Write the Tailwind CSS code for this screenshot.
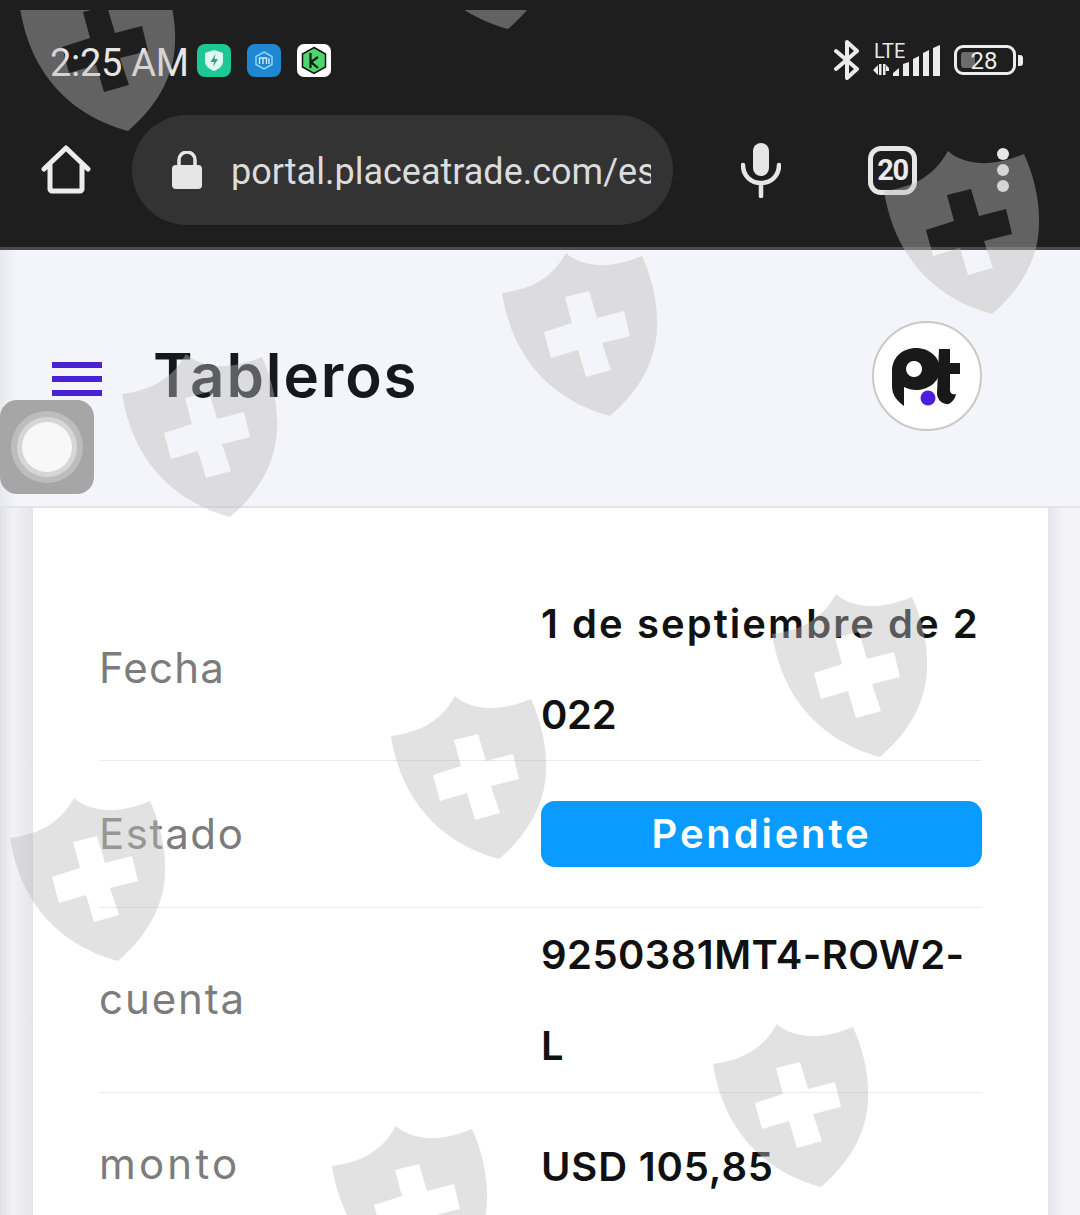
<!DOCTYPE html>
<html lang="es">
<head>
  <meta charset="UTF-8" />
  <title>Tableros</title>
  <script src="https://cdn.jsdelivr.net/npm/@tailwindcss/browser@4"></script>
</head>
<body class="bg-[#f4f5fa]">
  <div class="relative w-[1080px] h-[1215px] overflow-hidden bg-[#f4f5fa] font-['Inter',sans-serif]">

    <!-- phone status bar + browser toolbar -->
    <header class="h-[250px] bg-[#1e1e1e] border-b-[3px] border-[#4b4b4b] font-['Roboto',sans-serif]">
      <div class="h-[115px] flex items-start justify-between pl-[50px] pr-[64px]">
        <div class="flex items-center h-[33px] mt-[44px]">
          <span class="text-[38px] leading-none text-[#e6e6e6] w-[147px] tracking-[-0.3px] mt-[5px]">2:25 AM</span>
          <svg class="w-[34px] h-[33px]" viewBox="0 0 34 33">
            <rect width="34" height="33" rx="8" fill="#1fc796"/>
            <path d="M17 6l9 3v8c0 5-4 8-9 10-5-2-9-5-9-10V9z" fill="#dff7ef"/>
            <path d="M18.500 10l-5 8h3.500l-1 5 5-8h-3.500z" fill="#3c9c86"/>
          </svg>
          <svg class="w-[34px] h-[33px] ml-[16px]" viewBox="0 0 34 33">
            <rect width="34" height="33" rx="8" fill="#1f86d2"/>
            <path d="M17 8l8 4.500v8L17 25l-8-4.500v-8z" fill="none" stroke="#8fd6f5" stroke-width="1.500"/>
            <path d="M12.500 20v-6h3.500v6M16 14h3.500v6M22 14v6" fill="none" stroke="#d5f0fb" stroke-width="1.300"/>
          </svg>
          <svg class="w-[34px] h-[33px] ml-[16px]" viewBox="0 0 34 33">
            <rect width="34" height="33" rx="7" fill="#fff"/>
            <path d="M17 3.500l11.500 6.500v13L17 29.500 5.500 23V10z" fill="#4fd46e" stroke="#111" stroke-width="1.500"/>
            <path d="M13.500 9v15M21 13l-7 5 7 6" fill="none" stroke="#06200f" stroke-width="2.200"/>
          </svg>
        </div>
        <div class="flex items-start mt-[40px]">
          <svg class="w-[26px] h-[40px]" viewBox="0 0 26 40">
            <path d="M2 11l21 18-10 9V2l10 9L2 29" fill="none" stroke="#ececec" stroke-width="4" stroke-linejoin="round" stroke-linecap="round"/>
          </svg>
          <div class="relative w-[67px] h-[36px] ml-[13px]">
            <span class="absolute left-[1px] top-[1px] text-[20px] leading-[20px] text-[#e6e6e6]">LTE</span>
            <svg class="absolute left-0 top-0" width="67" height="36" viewBox="0 0 67 36">
              <path d="M0 30l5-5v10zM6 24h2.500v11H6zM10 24h2.500v11H10zM13 25l3 3v3h-3z" fill="#ececec"/>
              <path d="M20 33l6-5v8h-6zM30 24l6-2v14h-6zM40 19l6-3v20h-6zM50 13l6-3v26h-6zM60 8l7-3v31h-7z" fill="#ececec"/>
            </svg>
          </div>
          <div class="relative w-[62px] h-[30px] ml-[14px] mt-[5px] rounded-[9px] border-[3px] border-[#ececec]">
            <div class="absolute left-[4px] top-[4px] w-[14px] h-[16px] rounded-[3px] bg-[#6b6b6b]"></div>
            <span class="absolute inset-0 flex items-center justify-center pr-[2px] pt-[2px] text-[24px] leading-none text-[#ececec]">28</span>
            <div class="absolute left-[61px] top-[7px] w-[5px] h-[11px] rounded-r-[3px] bg-[#ececec]"></div>
          </div>
        </div>
      </div>
      <div class="flex items-center h-[110px]">
        <svg class="ml-[41px] w-[50px] h-[50px]" viewBox="0 0 50 50">
          <path d="M3 24L25 3l22 21M9 19v25a2 2 0 0 0 2 2h28a2 2 0 0 0 2-2V19" fill="none" stroke="#ececec" stroke-width="5" stroke-linecap="round" stroke-linejoin="round"/>
        </svg>
        <div class="ml-[41px] w-[541px] h-[110px] rounded-[55px] bg-[#333] flex items-center pl-[40px] pr-[21px]">
          <svg class="w-[30px] h-[38px] shrink-0" viewBox="0 0 30 38">
            <path d="M7 15V9a8 8 0 0 1 16 0v6" fill="none" stroke="#e6e6e6" stroke-width="3.500"/>
            <rect y="14" width="30" height="24" rx="4" fill="#e6e6e6"/>
          </svg>
          <span class="ml-[29px] mt-[3px] text-[36px] leading-none text-[#dcdcdc] overflow-hidden whitespace-nowrap w-[420px]">portal.placeatrade.com/es</span>
        </div>
        <svg class="ml-[68px] w-[40px] h-[56px]" viewBox="0 0 40 56">
          <rect x="12" y="1" width="16" height="33" rx="8" fill="#e6e6e6"/>
          <path d="M2 23c0 11 8 18 18 18s18-7 18-18M20 41v13" fill="none" stroke="#e6e6e6" stroke-width="4.500" stroke-linecap="round"/>
        </svg>
        <div class="ml-[87px] w-[49px] h-[49px] rounded-[13px] border-[5px] border-[#e6e6e6] flex items-center justify-center font-bold text-[29px] leading-none tracking-[-1.5px] text-[#ececec]">20</div>
        <div class="ml-[80px] flex flex-col gap-[4px]">
          <div class="w-[12px] h-[12px] rounded-full bg-[#e6e6e6]"></div>
          <div class="w-[12px] h-[12px] rounded-full bg-[#e6e6e6]"></div>
          <div class="w-[12px] h-[12px] rounded-full bg-[#e6e6e6]"></div>
        </div>
      </div>
    </header>

    <!-- page header -->
    <div class="h-[258px] flex items-center justify-between pl-[52px] pr-[98px] pb-[6px] border-b-2 border-[#e3e4e9] bg-gradient-to-r from-[#e8e9ee] from-0% to-[#f4f5fa] to-[1.5%]">
      <div class="flex items-center">
        <div class="w-[50px] mt-[7px] flex flex-col gap-[8px]">
          <div class="h-[6px] bg-[#4a22d6]"></div>
          <div class="h-[6px] bg-[#4a22d6]"></div>
          <div class="h-[6px] bg-[#4a22d6]"></div>
        </div>
        <h1 class="ml-[51px] text-[60px] leading-none font-semibold text-[#15191f] tracking-[1.9px]">Tableros</h1>
      </div>
      <div class="w-[110px] h-[110px] mt-[2px] rounded-full bg-white border-2 border-[#c9c9c9] flex items-center justify-center">
        <svg class="w-[110px] h-[110px] shrink-0" viewBox="873 321 110 110">
          <path fill-rule="evenodd" d="M893 371c0-14 11-23 24-23 13 0 24 9 24 21 0 13-12 21-24 21-4 0-8-1-12-3v19c-7-5-12-11-12-20zM915 361a8 8 0 1 0 .1 0z" fill="#191919"/>
          <path d="M940 349h11v14h10v11h-10v16c0 3 2 5 6 4-1 6-6 11-10 10-5-1-9-5-9-11z" fill="#191919"/>
          <circle cx="929" cy="398" r="7.500" fill="#4a1fe0"/>
        </svg>
      </div>
    </div>

    <!-- card with the grey gutters either side -->
    <main class="h-[707px] flex">
      <div class="w-[33px] bg-gradient-to-r from-[#e0e1e6] via-[#f3f3f7] via-40% to-[#e5e5e9]"></div>
      <div class="w-[1015px] h-full bg-white px-[67px] pt-[70px]">
        <div class="grid grid-cols-[441px_441px] items-center h-[183px] border-b border-[#e9e9ec]">
          <div class="text-[42px] text-[#7c7c7c] tracking-[1.2px] -mt-[4px] -ml-px">Fecha</div>
          <div class="text-[40px] leading-[91px] font-semibold text-[#111]"><span class="tracking-[2.05px]">1 de septiembre de 2</span><br><span class="-tracking-[0.3px]">022</span></div>
        </div>
        <div class="grid grid-cols-[441px_441px] items-center h-[147px] border-b border-[#e9e9ec]">
          <div class="text-[42px] text-[#7c7c7c] tracking-[1.6px] -mt-[2px] -ml-px">Estado</div>
          <div class="h-[66px] rounded-[14px] bg-[#0a9bff] flex items-center justify-center text-[40px] font-semibold text-white tracking-[2.8px]">Pendiente</div>
        </div>
        <div class="grid grid-cols-[441px_441px] items-center h-[185px] border-b border-[#e9e9ec]">
          <div class="text-[42px] text-[#7c7c7c] tracking-[1.9px] -mt-[4px] -ml-px">cuenta</div>
          <div class="text-[40px] leading-[91px] font-semibold text-[#111] tracking-[0.45px]">9250381MT4-ROW2-<br>L</div>
        </div>
        <div class="grid grid-cols-[441px_441px] items-center h-[146px]">
          <div class="text-[42px] text-[#7c7c7c] tracking-[3.2px] -mt-[6px] -ml-px">monto</div>
          <div class="text-[40px] leading-[91px] font-semibold text-[#111] tracking-[0.85px]">USD 105,85</div>
        </div>
      </div>
      <div class="w-[32px] bg-gradient-to-r from-[#e6e6ea] to-[#f4f4f8] to-50%"></div>
    </main>

    <!-- floating assistive button -->
    <div class="absolute left-0 top-[400px] w-[94px] h-[94px] rounded-[17px] bg-[#a6a6a6] flex items-center justify-center">
      <div class="w-[72px] h-[72px] rounded-full bg-[#bdbdbd] flex items-center justify-center">
        <div class="w-[60px] h-[60px] rounded-full bg-[#d6d6d6] flex items-center justify-center">
          <div class="w-[50px] h-[50px] rounded-full bg-[#f8f8f8]"></div>
        </div>
      </div>
    </div>

    <!-- shield watermark sits over everything, starts 10px down -->
    <svg class="absolute left-0 top-[10px] pointer-events-none" width="1080" height="1205" viewBox="0 10 1080 1205">
      <defs>
        <path id="shield" fill-rule="evenodd" fill="#bcbcbc" fill-opacity="0.43" d="M64 0C72 8 88 13 105 12C118 11 130 7 140 3C150 25 156 50 155 75C154 110 135 140 108 163C60 150 12 115 0 40C30 36 50 25 64 0ZM63 44L87 38L95 65L122 58L128 83L100 90L109 117L84 124L76 97L49 105L42 79L70 70Z"/>
      </defs>
      <use href="#shield" x="20" y="-32"/>
      <use href="#shield" x="400" y="-134"/>
      <use href="#shield" x="884" y="151"/>
      <use href="#shield" x="502" y="253"/>
      <use href="#shield" x="122" y="354"/>
      <use href="#shield" x="772" y="594"/>
      <use href="#shield" x="391" y="696"/>
      <use href="#shield" x="10" y="798"/>
      <use href="#shield" x="713" y="1024"/>
      <use href="#shield" x="332" y="1126"/>
    </svg>
  </div>
</body>
</html>
